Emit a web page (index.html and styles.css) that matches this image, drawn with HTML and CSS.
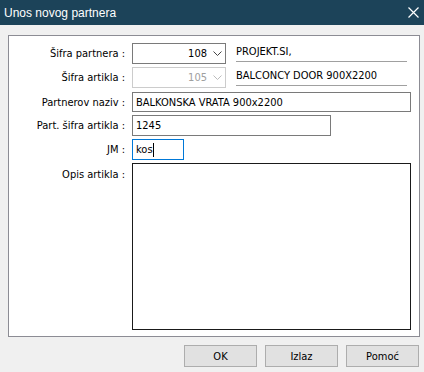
FILE: index.html
```html
<!DOCTYPE html>
<html>
<head>
<meta charset="utf-8">
<link rel="stylesheet" href="styles.css">
</head>
<body>
<div class="titlebar">
  <span class="title">Unos novog partnera</span>
  <svg class="close" width="11" height="11" viewBox="0 0 11 11"><path d="M0.5 0.5 L10.5 10.5 M10.5 0.5 L0.5 10.5" stroke="#fff" stroke-width="1.2" fill="none"/></svg>
</div>
<div class="content">
  <div class="panel">
    <div class="row r1">
      <div class="label">Šifra partnera :</div>
      <div class="field">
        <div class="combo"><span class="val">108</span><svg class="chev" width="9" height="5" viewBox="0 0 9 5"><path d="M0.5 0.5 L4.5 4.5 L8.5 0.5" stroke="#444" fill="none"/></svg></div>
        <div class="desc">PROJEKT.SI,</div>
      </div>
    </div>
    <div class="row r2">
      <div class="label">Šifra artikla :</div>
      <div class="field">
        <div class="combo disabled"><span class="val">105</span><svg class="chev" width="9" height="5" viewBox="0 0 9 5"><path d="M0.5 0.5 L4.5 4.5 L8.5 0.5" stroke="#bbb" fill="none"/></svg></div>
        <div class="desc">BALCONCY DOOR 900X2200</div>
      </div>
    </div>
    <div class="row r3">
      <div class="label">Partnerov naziv :</div>
      <div class="field"><div class="input wide">BALKONSKA VRATA 900x2200</div></div>
    </div>
    <div class="row r4">
      <div class="label">Part. šifra artikla :</div>
      <div class="field"><div class="input mid">1245</div></div>
    </div>
    <div class="row r5">
      <div class="label">JM :</div>
      <div class="field"><div class="input small focus">kos<span class="caret"></span></div></div>
    </div>
    <div class="row r6">
      <div class="label top">Opis artikla :</div>
      <div class="field"><div class="textarea"></div></div>
    </div>
  </div>
  <div class="buttons">
    <div class="btn">OK</div>
    <div class="btn">Izlaz</div>
    <div class="btn">Pomoć</div>
  </div>
</div>
</body>
</html>
```
FILE: styles.css
```css
html, body {
  margin: 0;
  padding: 0;
  background: #f0f0f0;
  width: 424px;
  height: 372px;
  overflow: hidden;
  font-family: "DejaVu Sans Condensed", "DejaVu Sans", sans-serif;
  font-size: 11px;
  color: #000;
}
.titlebar {
  height: 25px;
  background: #1c4359;
  display: flex;
  align-items: center;
  justify-content: space-between;
  padding: 0 5px 0 4px;
  box-sizing: border-box;
}
.title {
  color: #fff;
  font-family: "Liberation Sans", Arial, sans-serif;
  font-size: 12px;
}
.close {
  display: block;
}
.content {
  padding: 10px 4px 0 8px;
}
.panel {
  width: 412px;
  height: 302px;
  box-sizing: border-box;
  border: 1px solid #8c8c94;
  background: #fff;
  padding-top: 7px;
}
.row {
  display: flex;
  align-items: center;
}
.r1 { height: 21px; }
.r2 { height: 21px; margin-top: 3px; }
.r3 { height: 20px; margin-top: 4px; }
.r4 { height: 21px; margin-top: 3px; }
.r5 { height: 21px; margin-top: 3px; }
.r6 { height: 167px; margin-top: 3px; align-items: flex-start; }
.label {
  width: 116px;
  text-align: right;
  padding-right: 7px;
  flex: none;
  white-space: nowrap;
}
.label.top { padding-top: 5px; }
.field {
  display: flex;
  align-items: center;
  height: 100%;
}
.combo {
  width: 94px;
  height: 21px;
  box-sizing: border-box;
  border: 1px solid #7a7a7a;
  display: flex;
  align-items: center;
  justify-content: flex-end;
  padding-right: 3px;
}
.combo .val { margin-right: 6px; }
.combo.disabled { border-color: #cccccc; color: #a0a0a0; }
.chev { display: block; }
.desc {
  margin-left: 10px;
  width: 171px;
  height: 17px;
  border-bottom: 1px solid #a0a0a0;
  box-sizing: border-box;
  line-height: 14px;
  color: #000;
}
.input {
  height: 100%;
  box-sizing: border-box;
  border: 1px solid #7a7a7a;
  display: flex;
  align-items: center;
  padding-left: 3px;
}
.wide { width: 279px; }
.mid { width: 199px; }
.small { width: 52px; }
.focus { border-color: #0078d7; }
.caret {
  display: inline-block;
  width: 1px;
  height: 14px;
  background: #000;
}
.textarea {
  width: 279px;
  height: 167px;
  box-sizing: border-box;
  border: 1px solid #1a1a1a;
}
.buttons {
  display: flex;
  justify-content: flex-end;
  gap: 8px;
  margin-top: 8px;
  padding-right: 1px;
}
.btn {
  width: 73px;
  height: 22px;
  box-sizing: border-box;
  border: 1px solid #adadad;
  background: #e1e1e1;
  display: flex;
  align-items: center;
  justify-content: center;
}
```
